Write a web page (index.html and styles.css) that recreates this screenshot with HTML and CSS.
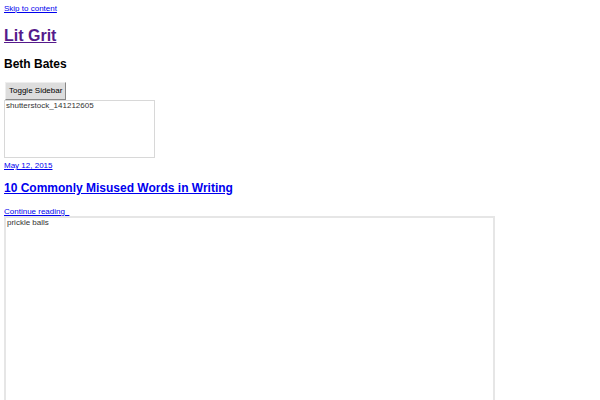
FILE: index.html
```html
<!DOCTYPE html>
<html>
<head>
    <title>Lit Grit</title>
    <link rel="stylesheet" href="styles.css">
</head>
<body>
    <a class="skip-link" href="#content">Skip to content</a>
    <header class="site-header">
        <h1 class="site-title"><a href="#">Lit Grit</a></h1>
        <h2 class="site-description">Beth Bates</h2>
        <button class="sidebar-toggle">Toggle Sidebar</button>
    </header>

    <main id="content">
        <article class="post">
            <div class="post-thumb thumb-small">shutterstock_141212605</div>
            <a class="post-date" href="#">May 12, 2015</a>
            <h2 class="entry-title"><a href="#">10 Commonly Misused Words in Writing</a></h2>
            <a class="more-link" href="#">Continue reading &nbsp;</a>
        </article>
        <article class="post">
            <div class="post-thumb thumb-large">prickle balls</div>
        </article>
    </main>
</body>
</html>
```

FILE: styles.css
```css
body {
    margin: 4px;
    font-family: "Liberation Sans", Arial, sans-serif;
    font-size: 8px;
    color: #000;
    background-color: #fff;
}
a {
    color: #0000ee;
}
.skip-link {
    display: inline-block;
}
.site-title {
    font-size: 16px;
    font-weight: bold;
    margin: 14px 0 12px;
}
.site-title a {
    color: #551a8b;
}
.site-description {
    font-size: 12px;
    font-weight: bold;
    margin: 10px 0 11px;
}
.sidebar-toggle {
    font-family: "Liberation Sans", Arial, sans-serif;
    font-size: 8px;
    padding: 3px 3px 4px;
    margin: 0 0 0 1px;
    background-color: #ddd;
    border: 1px solid #888;
    border-top-color: #eee;
    border-left-color: #eee;
}
.post-thumb {
    box-sizing: border-box;
    border: 1px solid #d8d8d8;
    padding: 0 0 0 1px;
    color: #333;
}
.thumb-small {
    width: 151px;
    height: 58px;
}
.thumb-large {
    width: 491px;
    height: 300px;
    border-color: #e6e6e6;
    border-width: 2px 2px 0 2px;
}
.post-date {
    display: inline-block;
    margin-top: 3px;
}
.entry-title {
    font-size: 12px;
    margin: 11px 0 12px;
}
.more-link {
    display: inline-block;
}
```
